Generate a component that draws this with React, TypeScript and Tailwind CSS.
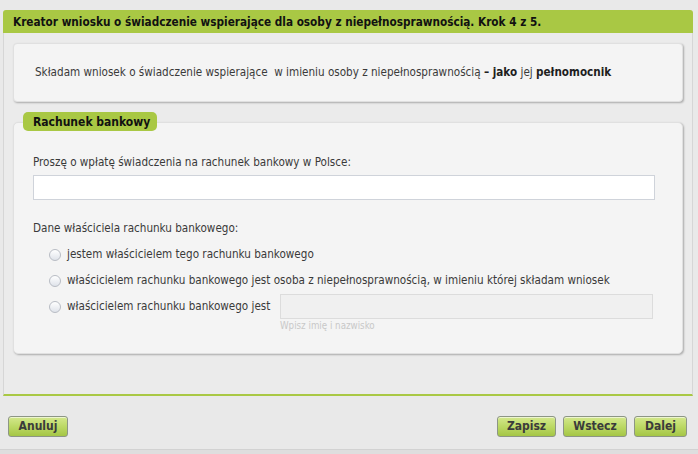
import React from 'react';

const font = { fontFamily: '"DejaVu Sans Condensed", "DejaVu Sans", Tahoma, sans-serif' };

const Radio = () => (
  <span className="inline-block w-[12px] h-[12px] rounded-full border border-[#b8bcc4] bg-gradient-to-b from-[#ffffff] to-[#dfe3ea] shrink-0" />
);

const Button = ({ label, width }: { label: string; width: string }) => (
  <button
    className={`h-[21px] ${width} rounded-[3px] border border-[#8d9685] bg-gradient-to-b from-[#d4e88c] via-[#bcd965] to-[#a5c645] text-[12px] font-bold text-[#3b3b3b] leading-[19px] shadow-[inset_0_1px_0_rgba(255,255,255,0.6)]`}
  >
    {label}
  </button>
);

export default function App() {
  return (
    <div className="min-h-[454px] bg-[#e9e9e9] pt-[10px] flex flex-col" style={font}>
      <div className="mx-[3px] w-[690px]">
        <div className="h-[23px] bg-[#a9c844] rounded-t-[3px] pl-[10px] text-[11.7px] font-bold leading-[24px] text-[#111]">
          Kreator wniosku o świadczenie wspierające dla osoby z niepełnosprawnością. Krok 4 z 5.
        </div>
        <div className="bg-[#ebebeb] border-x border-[#d6d6d6] border-b-2 border-b-[#a9c844] px-[9px] pt-[10px] pb-[40px]">
          <div className="h-[59px] bg-[#f4f4f4] rounded-[4px] border border-[#e0e0e0] shadow-[1px_1px_2px_rgba(0,0,0,0.28)] flex items-center pl-[21px] text-[11.6px] text-[#3a3a3a]">
            <span>
              Składam wniosek o świadczenie wspierające&nbsp; w imieniu osoby z niepełnosprawnością{' '}
              <b className="text-[#1e1e1e]">– jako</b> jej <b className="text-[#1e1e1e]">pełnomocnik</b>
            </span>
          </div>

          <div className="relative mt-[20px] h-[232px] bg-[#f4f4f4] rounded-[5px] border border-[#e0e0e0] shadow-[1px_1px_2px_rgba(0,0,0,0.28)] pl-[19px] pr-[26px] pt-[31px] text-[11.6px] text-[#3a3a3a]">
            <div className="absolute left-[9px] top-[-11px] h-[19px] w-[134px] rounded-[5px] bg-[#a9c844] pl-[10px] text-[12px] font-bold leading-[20px] text-[#111]">
              Rachunek bankowy
            </div>
            <div className="leading-[16px]">Proszę o wpłatę świadczenia na rachunek bankowy w Polsce:</div>
            <div className="mt-[5px] h-[25px] w-[622px] bg-white border border-[#cfd3da]" />
            <div className="mt-[20px] leading-[16px]">Dane właściciela rachunku bankowego:</div>
            <div className="mt-[6px] pl-[16px]">
              <div className="h-[26px] flex items-center gap-[6px]">
                <Radio />
                <span>jestem właścicielem tego rachunku bankowego</span>
              </div>
              <div className="h-[26px] flex items-center gap-[6px]">
                <Radio />
                <span className="whitespace-nowrap">właścicielem rachunku bankowego jest osoba z niepełnosprawnością, w imieniu której składam wniosek</span>
              </div>
              <div className="h-[26px] flex items-center gap-[6px]">
                <Radio />
                <span className="w-[207px] shrink-0 whitespace-nowrap">właścicielem rachunku bankowego jest</span>
                <div className="h-[25px] w-[373px] shrink-0 bg-[#f0f0f0] border border-[#dcdcdc] -mt-[2px]" />
              </div>
              <div className="pl-[231px] text-[9.7px] leading-[12px] text-[#c8c8c8]">Wpisz imię i nazwisko</div>
            </div>
          </div>
        </div>
      </div>

      <div className="mt-[20px] px-[8px] pr-[11px] flex justify-between">
        <Button label="Anuluj" width="w-[60px]" />
        <div className="flex gap-[7px]">
          <Button label="Zapisz" width="w-[59px]" />
          <Button label="Wstecz" width="w-[64px]" />
          <Button label="Dalej" width="w-[53px]" />
        </div>
      </div>

      <div className="mt-auto h-[5px] border-t border-[#d2d2d2] bg-[#dedede]" />
    </div>
  );
}
